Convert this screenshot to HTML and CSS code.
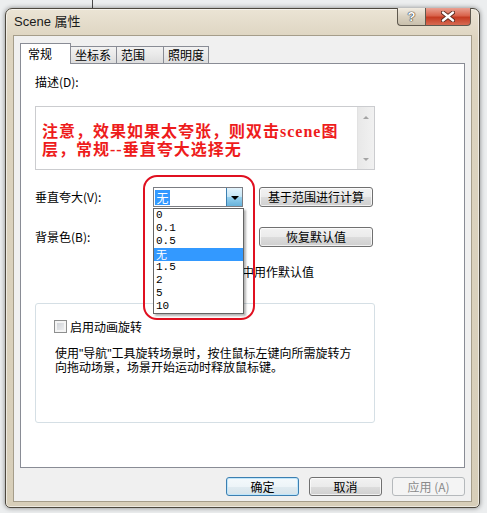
FILE: index.html
```html
<!DOCTYPE html>
<html lang="zh-CN">
<head>
    <meta charset="UTF-8">
    <title>Scene 属性</title>
    <link rel="stylesheet" href="styles.css">
</head>
<body>
    <div class="window">
        <div class="titlebar">
            <span class="title">Scene 属性</span>
            <div class="caption">
                <span class="cap-help">?</span>
                <span class="cap-close">
                    <svg width="14" height="11" viewBox="0 0 14 11"><path d="M2 1.5 L12 9.5 M12 1.5 L2 9.5" stroke="#5a2a20" stroke-width="4.2" stroke-linecap="round"/><path d="M2 1.5 L12 9.5 M12 1.5 L2 9.5" stroke="#fff" stroke-width="2.4" stroke-linecap="round"/></svg>
                </span>
            </div>
        </div>

        <div class="client">
            <ul class="tabs">
                <li class="tab active">常规</li>
                <li class="tab t2">坐标系</li>
                <li class="tab t3">范围</li>
                <li class="tab t4">照明度</li>
            </ul>

            <div class="panel">
                <p class="desc-label">描述(D):</p>
                <div class="textbox">
                    <p class="note">注意，效果如果太夸张，则双击scene图<br>层，常规--垂直夸大选择无</p>
                    <div class="vscroll"><span class="arr up"></span><span class="arr down"></span></div>
                </div>

                <div class="row row-exag">
                    <span class="row-label">垂直夸大(V):</span>
                    <div class="combo">
                        <span class="combo-val">无</span>
                        <span class="combo-btn"></span>
                    </div>
                    <button class="btn wide">基于范围进行计算</button>

                    <!-- 펼쳐진 목록 -->
                    <ul class="droplist">
                        <li>0</li>
                        <li>0.1</li>
                        <li>0.5</li>
                        <li class="sel cjk">无</li>
                        <li>1.5</li>
                        <li>2</li>
                        <li>5</li>
                        <li>10</li>
                    </ul>
                    <div class="mark"></div>
                </div>

                <div class="row row-bg">
                    <span class="row-label">背景色(B):</span>
                    <div class="swatch"></div>
                    <button class="btn wide">恢复默认值</button>
                </div>

                <div class="row row-def">
                    <span class="check"></span>
                    <span>在新文档中用作默认值</span>
                </div>

                <div class="group">
                    <div class="group-check">
                        <span class="check"></span>
                        <span>启用动画旋转</span>
                    </div>
                    <p class="group-text">使用"导航"工具旋转场景时，按住鼠标左键向所需旋转方<br>向拖动场景，场景开始运动时释放鼠标键。</p>
                </div>
            </div>

            <div class="actions">
                <button class="btn act default">确定</button>
                <button class="btn act">取消</button>
                <button class="btn act disabled">应用 (A)</button>
            </div>
        </div>
    </div>
</body>
</html>
```

FILE: styles.css
```css
*{margin:0; padding:0; box-sizing:border-box;}
li{list-style:none;}

body{height:513px; overflow:hidden; font:12px/14px "Noto Sans CJK SC", "Liberation Sans", sans-serif; color:#000;
    background:#eceeef linear-gradient(to right, transparent 92px, #4a4a4a 92px, #4a4a4a 93px, transparent 93px) no-repeat 0 0 / 100% 8px;}

/* window frame */
.window{width:475px; height:500px; margin:8px 0 0 5px; display:flex; flex-direction:column; border:1px solid #4d483e; border-radius:7px 7px 5px 5px;
    background:linear-gradient(#ebe4d5, #ddd4c0 30px, #d7ceb9); box-shadow:0 0 5px rgba(0,0,0,.45), inset 0 0 0 1px rgba(255,255,255,.55);}
.titlebar{height:26px; display:flex; justify-content:space-between; align-items:flex-start; padding-left:8px;}
.title{font:13px/26px "Liberation Sans", "Noto Sans CJK SC", sans-serif; color:#1b1b1b;}
.caption{display:flex; margin-right:8px; margin-top:-1px;}
.caption span{height:18px; display:flex; align-items:center; justify-content:center; border:1px solid #5f594e; border-top:none;}
.cap-help{width:28px; border-radius:0 0 0 4px; border-right:none !important; background:linear-gradient(#f1ece2, #d9d1c0 50%, #c9c0ad);
    font:bold 13px/1 "Liberation Sans", sans-serif; color:#fff; text-shadow:0 0 1px #333, 0 0 1px #333, 0 0 1px #333;}
.cap-close{width:46px; border-radius:0 0 4px 0; background:linear-gradient(#eaa192, #d9634c 45%, #c53b22 55%, #d66a52);}

.client{flex:1; margin:0 7px 5px 7px; padding:7px 6px 0 6px; background:#f0f0f0; border:1px solid #a59d8a;}

/* tabs */
.tabs{display:flex; align-items:flex-end; height:20px; position:relative; z-index:1;}
.tab{height:17px; border:1px solid #898c95; border-bottom:none; margin-left:-1px; padding-left:4px; line-height:15px;
    background:linear-gradient(#f2f2f2, #e9e9e9 50%, #dcdcdc);}
.tab.active{width:51px; height:21px; margin:0 0 -1px 0; padding-left:7px; line-height:20px; background:#fff;}
.t2{width:47px;}
.t3{width:48px;}
.t4{width:46px;}

.panel{height:405px; border:1px solid #898c95; background:#fff; padding:0 14px;}
.desc-label{margin-top:11px;}

.textbox{position:relative; height:64px; width:340px; margin-top:17px; border:1px solid #cbcccf; padding:16px 0 0 6px;}
.note{font:bold 16px/18px "Liberation Serif", "Noto Sans CJK SC", serif; color:#ee1c1c; white-space:nowrap; letter-spacing:1px;}
.vscroll{position:absolute; right:0; top:0; width:17px; height:62px; background:linear-gradient(to right, #e8e8e8, #f1f1f1); border-left:1px solid #e2e2e2;}
.arr{position:absolute; left:5px; width:0; height:0; border-left:3px solid transparent; border-right:3px solid transparent;}
.arr.up{top:9px; border-bottom:3px solid #a4a4a4;}
.arr.down{bottom:8px; border-top:3px solid #a4a4a4;}

.row{display:flex; align-items:center; position:relative;}
.row-label{width:118px; flex:none;}
.row-exag{margin-top:17px; height:20px;}
.row-bg{margin-top:20px; height:20px;}
.row-def{margin-top:18px; height:14px; padding-left:142px; gap:4px;}

.combo{width:90px; height:20px; border:1px solid #7b7d83; background:#fff; display:flex; justify-content:space-between; align-items:center; padding-left:1px;}
.combo-val{width:15px; height:15px; line-height:15px; background:#3399ff; color:#fff; text-align:center;}
.combo-btn{position:relative; width:16px; height:18px; border-left:1px solid #3c7fb1; background:linear-gradient(#e5f4fc, #c4e5f6 50%, #98d1ef 50%, #68b3db);}
.combo-btn::after{content:""; position:absolute; left:4px; top:8px; border-left:4px solid transparent; border-right:4px solid transparent; border-top:4px solid #000;}
.swatch{width:90px; height:20px;}

.btn{height:20px; font:12px/18px "Noto Sans CJK SC", "Liberation Sans", sans-serif; color:#000; border:1px solid #707070; border-radius:3px;
    background:linear-gradient(#f2f2f2, #ebebeb 50%, #dddddd 50%, #cfcfcf); box-shadow:inset 0 0 0 1px rgba(255,255,255,.7);}
.btn.wide{width:114px; margin-left:16px;}

/* opened list + red annotation lie over the form */
.droplist{position:absolute; left:118px; top:21px; width:91px; height:106px; border:1px solid #646464; background:#fff; z-index:3;
    box-shadow:2px 2px 2px rgba(0,0,0,.3);}
.droplist li{height:13px; font:11px/13px "Liberation Mono", monospace; padding-left:2px;}
.droplist li.cjk{font:11px/13px "Noto Sans CJK SC", sans-serif;}
.droplist li.sel{background:#3399ff; color:#fff;}
.mark{position:absolute; left:108px; top:-12px; width:112px; height:145px; border:2px solid #e01020; border-radius:14px; z-index:4;}

.check{width:13px; height:13px; flex:none; border:1px solid #8e8f8f; box-shadow:inset 0 0 0 2px #f4f4f4; background:linear-gradient(135deg, #c8ccd2, #f4f4f4);}

.group{margin-top:24px; width:340px; height:120px; border:1px solid #d5dfe5; border-radius:3px; padding:16px 0 0 18px;}
.group-check{display:flex; align-items:center; gap:3px; height:13px;}
.group-text{margin-top:14px; font:12px/14px "Liberation Sans", "Noto Sans CJK SC", sans-serif; white-space:nowrap; padding-left:1px;}

.actions{display:flex; justify-content:flex-end; gap:10px; margin-top:9px;}
.btn.act{width:73px; height:19px; line-height:17px;}
.btn.default{border-color:#3c7fb1; box-shadow:inset 0 0 0 1px #bfe6fb; background:linear-gradient(#f4f9fc, #edf4f8 50%, #e0ebf1 50%, #d6e3ea);}
.btn.disabled{border-color:#b5b9bc; background:#f4f4f4; color:#8a8a8a; box-shadow:none;}
```
